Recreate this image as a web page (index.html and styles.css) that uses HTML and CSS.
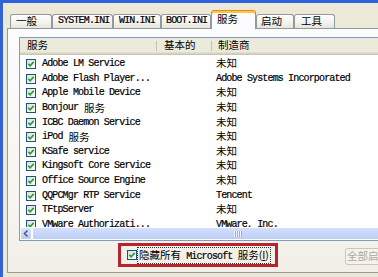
FILE: index.html
```html
<!DOCTYPE html>
<html>
<head>
<meta charset="utf-8">
<link rel="stylesheet" href="styles.css">
</head>
<body>
<div class="win">
  <div class="tabs">
    <div class="tab w1"><span class="c">一般</span></div>
    <div class="tab w2">SYSTEM.INI</div>
    <div class="tab w3">WIN.INI</div>
    <div class="tab w4">BOOT.INI</div>
    <div class="tab sel w5"><span class="c">服务</span></div>
    <div class="tab w6"><span class="c">启动</span></div>
    <div class="tab w7"><span class="c">工具</span></div>
  </div>
  <div class="panel">
    <div class="list">
      <div class="head">
        <div class="hc h1"><span class="c">服务</span></div>
        <div class="hc h2"><span class="c">基本的</span></div>
        <div class="hc h3"><span class="c">制造商</span></div>
      </div>
      <div class="rows">
        <div class="row"><div class="r1"><svg class="cb" viewBox="0 0 10 10"><use href="#chk"/></svg>Adobe LM Service</div><div class="r2"></div><div class="r3"><span class="c">未知</span></div></div>
        <div class="row"><div class="r1"><svg class="cb" viewBox="0 0 10 10"><use href="#chk"/></svg>Adobe Flash Player...</div><div class="r2"></div><div class="r3">Adobe Systems Incorporated</div></div>
        <div class="row"><div class="r1"><svg class="cb" viewBox="0 0 10 10"><use href="#chk"/></svg>Apple Mobile Device</div><div class="r2"></div><div class="r3"><span class="c">未知</span></div></div>
        <div class="row"><div class="r1"><svg class="cb" viewBox="0 0 10 10"><use href="#chk"/></svg>Bonjour <span class="c">服务</span></div><div class="r2"></div><div class="r3"><span class="c">未知</span></div></div>
        <div class="row"><div class="r1"><svg class="cb" viewBox="0 0 10 10"><use href="#chk"/></svg>ICBC Daemon Service</div><div class="r2"></div><div class="r3"><span class="c">未知</span></div></div>
        <div class="row"><div class="r1"><svg class="cb" viewBox="0 0 10 10"><use href="#chk"/></svg>iPod <span class="c">服务</span></div><div class="r2"></div><div class="r3"><span class="c">未知</span></div></div>
        <div class="row"><div class="r1"><svg class="cb" viewBox="0 0 10 10"><use href="#chk"/></svg>KSafe service</div><div class="r2"></div><div class="r3"><span class="c">未知</span></div></div>
        <div class="row"><div class="r1"><svg class="cb" viewBox="0 0 10 10"><use href="#chk"/></svg>Kingsoft Core Service</div><div class="r2"></div><div class="r3"><span class="c">未知</span></div></div>
        <div class="row"><div class="r1"><svg class="cb" viewBox="0 0 10 10"><use href="#chk"/></svg>Office Source Engine</div><div class="r2"></div><div class="r3"><span class="c">未知</span></div></div>
        <div class="row"><div class="r1"><svg class="cb" viewBox="0 0 10 10"><use href="#chk"/></svg>QQPCMgr RTP Service</div><div class="r2"></div><div class="r3">Tencent</div></div>
        <div class="row"><div class="r1"><svg class="cb" viewBox="0 0 10 10"><use href="#chk"/></svg>TFtpServer</div><div class="r2"></div><div class="r3"><span class="c">未知</span></div></div>
        <div class="row"><div class="r1"><svg class="cb" viewBox="0 0 10 10"><use href="#chk"/></svg>VMware Authorizati...</div><div class="r2"></div><div class="r3">VMware, Inc.</div></div>
      </div>
      <div class="hs">
        <div class="sbtn"><svg width="6" height="7" viewBox="0 0 6 7"><path d="M4.5 0.5 L1.5 3.5 L4.5 6.5" fill="none" stroke="#4D6185" stroke-width="1.6"/></svg></div>
        <div class="thumb"><div class="grip"></div></div>
      </div>
    </div>
    <div class="foot">
      <div class="redbox">
        <svg class="cb" viewBox="0 0 10 10"><use href="#chk"/></svg>
        <div class="label"><span class="c">隐藏所有</span> Microsoft <span class="c">服务(<u>I</u>)</span></div>
      </div>
      <div class="btn"><span class="c">全部启用</span></div>
    </div>
  </div>
</div>
<svg class="defs" width="0" height="0">
  <defs>
    <linearGradient id="cbg" x1="0" y1="0" x2="1" y2="1">
      <stop offset="0" stop-color="#DCDCD7"/>
      <stop offset="1" stop-color="#FFFFFF"/>
    </linearGradient>
    <g id="chk">
      <rect x="0.5" y="0.5" width="9" height="9" fill="url(#cbg)" stroke="#1C5180"/>
      <path d="M2.3 4.8 L4.1 6.8 L7.7 2.9" fill="none" stroke="#21A121" stroke-width="1.6"/>
    </g>
  </defs>
</svg>
</body>
</html>
```

FILE: styles.css
```css
* { box-sizing: border-box; }

body {
  margin: 0;
  width: 378px;
  height: 277px;
  overflow: hidden;
  background: #ECE9D8;
}

.win {
  height: 277px;
  border-top: 3px solid #2D63D8;
  border-left: 3px solid #3563D3;
  padding-left: 4px;
  font-family: "Liberation Mono", "Noto Sans CJK SC", monospace;
  font-size: 10px;
  letter-spacing: -0.85px;
  color: #000;
  -webkit-text-stroke: 0.2px #000;
}

.c {
  font-family: "Noto Sans CJK SC", sans-serif;
  font-size: 10.5px;
  letter-spacing: 0;
  -webkit-text-stroke: 0;
}

.defs { position: absolute; }

/* tabs */
.tabs {
  display: flex;
  align-items: flex-end;
  height: 25px;
  padding-left: 3px;
  position: relative;
  z-index: 1;
}

.tab {
  height: 14px;
  border: 1px solid #919B9C;
  border-bottom: none;
  border-radius: 3px 3px 0 0;
  background: linear-gradient(#FEFEFE, #F3F2EC 60%, #E6E5DC);
  line-height: 12px;
  padding-left: 5px;
  white-space: nowrap;
  overflow: hidden;
}

.tab.sel {
  height: 19px;
  margin-bottom: -1px;
  background: #FCFCFE;
  border-top: 1px solid #E68B2C;
  box-shadow: inset 0 2px 0 #FFC73C;
  line-height: 16px;
}

.w1 { width: 42px; }
.w2 { width: 61px; }
.w3 { width: 48px; }
.w4 { width: 50px; padding-left: 4px; }
.w5 { width: 45px; }
.w6 { width: 38px; padding-left: 4px; }
.w7 { width: 41px; padding-left: 6px; }

/* panel */
.panel {
  width: 440px;
  height: 245px;
  border: 1px solid #919B9C;
  background: linear-gradient(#FCFCFE, #F6F5F0 70%, #F1EFE7);
  padding: 8px 0 0 11px;
}

.list {
  width: 470px;
  height: 204px;
  border: 1px solid #7F9DB9;
  background: #fff;
  display: flex;
  flex-direction: column;
  overflow: hidden;
}

.head {
  height: 17px;
  flex: none;
  display: flex;
  background: #EBEADB;
  box-shadow: inset 0 -1px 0 #CBC7B8, inset 0 -2px 0 #D6D2C2, inset 0 -3px 0 #E2DED0;
  line-height: 14px;
  white-space: nowrap;
}

.hc {
  background: linear-gradient(#C5C2B2, #C5C2B2) no-repeat left 0 top 3px / 1px 10px;
}

.h1 { width: 136px; padding-left: 7px; background: none; }
.h2 { width: 55px; padding-left: 8px; }
.h3 { flex: 1; padding-left: 7px; }

.rows {
  height: 172px;
  flex: none;
  padding-top: 2px;
  overflow: hidden;
}

.row {
  display: flex;
  height: 14.6px;
  align-items: center;
  white-space: nowrap;
  line-height: 14px;
}

.r1 {
  width: 136px;
  padding-left: 6px;
  display: flex;
  align-items: center;
  gap: 6px;
  overflow: hidden;
}

.r2 { width: 55px; }
.r3 { padding-left: 5px; }

.cb {
  width: 10px;
  height: 10px;
  flex: none;
  display: block;
}

/* scrollbar */
.hs {
  height: 13px;
  flex: none;
  display: flex;
  background: #F4F3EE;
}

.sbtn {
  width: 12px;
  background: linear-gradient(#DCE6FD, #B8CBF5);
  border: 1px solid #fff;
  border-radius: 2px;
  display: flex;
  align-items: center;
  justify-content: center;
}

.thumb {
  flex: 1;
  background: linear-gradient(#D4E0FC, #BCCEF6);
  border: 1px solid #fff;
  border-radius: 2px;
  display: flex;
  align-items: center;
}

.grip {
  margin-left: 201px;
  width: 8px;
  height: 6px;
  background: repeating-linear-gradient(90deg, #EEF4FE 0 1px, #8CB0F8 1px 2px);
}

/* footer */
.foot {
  display: flex;
  align-items: flex-start;
  margin-top: 2px;
}

.redbox {
  margin-left: 99px;
  width: 160px;
  height: 24px;
  border: 3px solid #B7242C;
  display: flex;
  align-items: center;
  padding-left: 6px;
}

.label {
  border: 1px dotted #333;
  padding: 0 1px;
  line-height: 13px;
  white-space: nowrap;
}

.btn {
  margin-left: 67px;
  margin-top: 5px;
  width: 80px;
  height: 17px;
  border: 1px solid #C9C7BA;
  border-radius: 3px;
  background: #F4F3EE;
  color: #ACA899;
  padding-left: 1px;
  line-height: 14px;
  white-space: nowrap;
  -webkit-text-stroke: 0;
}
```
